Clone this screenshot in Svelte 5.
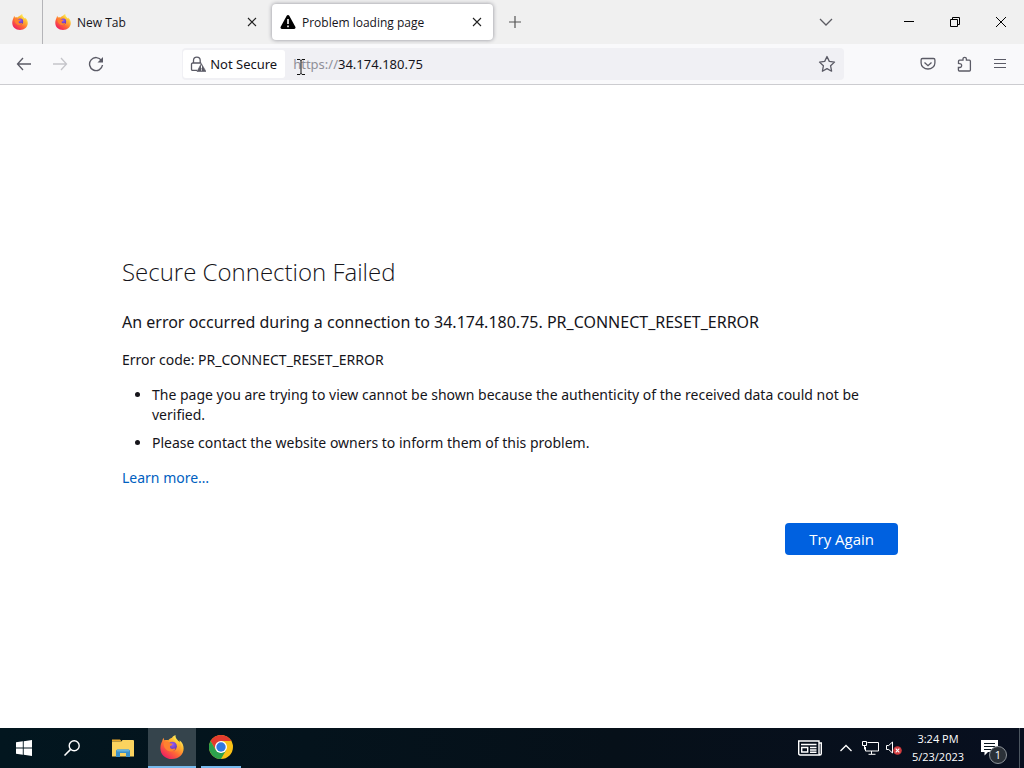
<script>
  let address = $state('34.174.180.75');

  const tips = [
    'The page you are trying to view cannot be shown because the authenticity of the received data could not be verified.',
    'Please contact the website owners to inform them of this problem.'
  ];
</script>

<svelte:head>
  <title>Problem loading page</title>
</svelte:head>

{#snippet firefox(size, id)}
  <svg width={size} height={size} viewBox="0 0 32 32" aria-hidden="true">
    <defs>
      <linearGradient id="{id}-flame" x1="0.85" y1="0.1" x2="0.2" y2="0.95">
        <stop offset="0" stop-color="#fff36a" />
        <stop offset="0.3" stop-color="#ffb52e" />
        <stop offset="0.6" stop-color="#ff6a35" />
        <stop offset="1" stop-color="#ee1d62" />
      </linearGradient>
      <linearGradient id="{id}-edge" x1="0.5" y1="0" x2="0.5" y2="1">
        <stop offset="0" stop-color="#fff04f" />
        <stop offset="0.5" stop-color="#ffc233" />
        <stop offset="1" stop-color="#ff8a35" />
      </linearGradient>
      <radialGradient id="{id}-globe" cx="0.5" cy="0.3" r="0.7">
        <stop offset="0" stop-color="#9a5cf5" />
        <stop offset="1" stop-color="#5934b0" />
      </radialGradient>
    </defs>
    <path
      fill="url(#{id}-flame)"
      d="M21 0c-2 3-1 6 2 8l3 3c.5-2 0-4 0-4 4 3 5.500 7 5.500 11C31.500 26 25 32 16 32S.500 26 .500 17.500C.500 13 2 10 3 8c.2-1.500 1-3.500 2-4.500C5 5 5.500 6.500 6 7c2-.5 4-.4 5 0 1-1.700 3-3 5-3.500 1-1.500 3-3 5-3.500z" />
    <circle cx="16.500" cy="15" r="6" fill="url(#{id}-globe)" />
    <path
      fill="#ff8130"
      d="M5 10c3-2 6-1.500 8 1l3.500.8c.5 1.500-1.500 2.500-3 3-.5 1.500 0 3 1.500 3.600 2 .7 3.500-1 5.500 0-1.500 3.500-6 4.500-10 2.500S4 14 5 10z" />
    <path
      fill="url(#{id}-edge)"
      d="M20.500 1c-2 3-2 5 0 7.500 2 2.500 3 5 2.500 8-.4 2.500-2 4.500-3.500 5.500 6 0 9-5 8-10C27 8 21 7 20.500 1z" />
  </svg>
{/snippet}

{#snippet cross()}
  <svg width="10" height="10" viewBox="0 0 10 10" aria-hidden="true">
    <path d="M1 1l8 8M9 1L1 9" fill="none" stroke="#222" stroke-width="1.100" />
  </svg>
{/snippet}

<div class="screen">
  <header>
    <div class="tabs">
      <button class="view" aria-label="Firefox View">{@render firefox(16, 'view')}</button>
      <div class="tab">
        {@render firefox(16, 'tab')}
        <button class="name">New Tab</button>
        <button class="close" aria-label="Close New Tab">{@render cross()}</button>
      </div>
      <div class="tab active">
        <svg width="16" height="16" viewBox="0 0 16 16" aria-hidden="true">
          <path d="M6.700 1.700a1.500 1.500 0 0 1 2.600 0l6 11A1.500 1.500 0 0 1 14 15H2a1.500 1.500 0 0 1-1.300-2.300z" fill="#000" />
          <path d="M8 5v5M8 11.500v1.700" stroke="#fff" stroke-width="1.600" />
        </svg>
        <button class="name">Problem loading page</button>
        <button class="close" aria-label="Close Problem loading page">{@render cross()}</button>
      </div>
      <button class="new" aria-label="Open a new tab">
        <svg width="12" height="12" viewBox="0 0 12 12"><path d="M6 0v12M0 6h12" stroke="#555" stroke-width="1.200" /></svg>
      </button>
      <button class="list" aria-label="List all tabs">
        <svg width="14" height="8" viewBox="0 0 14 8"><path d="M1 1l6 6 6-6" fill="none" stroke="#5b5b62" stroke-width="1.300" /></svg>
      </button>
      <div class="window">
        <button aria-label="Minimize">
          <svg width="10" height="10" viewBox="0 0 10 10"><path d="M0 4.500h10" stroke="#000" /></svg>
        </button>
        <button aria-label="Restore">
          <svg width="10" height="10" viewBox="0 0 10 10"><path d="M.5 2.500h7v7h-7zM2.500 2.500v-2h7v7h-2" fill="none" stroke="#000" /></svg>
        </button>
        <button aria-label="Close">
          <svg width="10" height="10" viewBox="0 0 10 10"><path d="M0 0l10 10M10 0L0 10" stroke="#000" /></svg>
        </button>
      </div>
    </div>

    <div class="nav">
      <button aria-label="Back">
        <svg width="16" height="16" viewBox="0 0 16 16"><path d="M7 2L1.500 8 7 14M1.500 8H15" fill="none" stroke="#5b5b66" stroke-width="1.300" /></svg>
      </button>
      <button aria-label="Forward" disabled>
        <svg width="16" height="16" viewBox="0 0 16 16"><path d="M9 2l5.500 6L9 14M14.500 8H1" fill="none" stroke="#c5c5ca" stroke-width="1.300" /></svg>
      </button>
      <button aria-label="Reload">
        <svg width="16" height="16" viewBox="0 0 16 16">
          <path d="M13.500 4.500A6.500 6.500 0 1 0 14.500 9" fill="none" stroke="#5b5b66" stroke-width="1.400" />
          <path d="M15 1v5.500H9.500z" fill="#5b5b66" />
        </svg>
      </button>
      <div class="spring"></div>
      <div class="urlbar">
        <button class="identity">
          <svg width="16" height="16" viewBox="0 0 16 16" aria-hidden="true">
            <path d="M7 14.400H2.700A1.200 1.200 0 0 1 1.500 13V8.200A1.200 1.200 0 0 1 2.700 7h8.500M3.500 7V4.500a3.300 3.300 0 0 1 6.700 0V7" fill="none" stroke="#5b5b66" stroke-width="1.300" />
            <path d="M11.300 7.500L16 15.500H7z" fill="#5b5b66" stroke="#5b5b66" stroke-linejoin="round" stroke-width=".6" />
            <path d="M11.500 9.500v3M11.500 13.300v1.200" stroke="#fff" />
          </svg>
          Not Secure
        </button>
        <label for="address">https://</label>
        <input id="address" type="text" bind:value={address} spellcheck="false" />
        <button class="star" aria-label="Bookmark this page">
          <svg width="18" height="18" viewBox="0 0 18 18">
            <path d="M9 1.500l2.300 4.900 5.200.7-3.900 3.700 1 5.400L9 13.600l-4.600 2.600 1-5.400L1.500 7.100l5.200-.7z" fill="none" stroke="#5b5b66" stroke-width="1.300" stroke-linejoin="round" />
          </svg>
        </button>
        <svg class="pointer" width="8" height="16" viewBox="0 0 8 16" aria-hidden="true">
          <path d="M0 .5h3l1 1 1-1h3M4 1v14M0 15.500h3l1-1 1 1h3" fill="none" stroke="#111" />
        </svg>
      </div>
      <div class="spring"></div>
      <button aria-label="Save to Pocket">
        <svg width="16" height="16" viewBox="0 0 16 16"><path d="M2.500 2.500h11c.8 0 1.400.6 1.400 1.400V7a6.900 6 0 0 1-13.800 0V3.900c0-.8.6-1.400 1.400-1.400zM4.500 6.500L8 9.700l3.500-3.200" fill="none" stroke="#5b5b66" stroke-width="1.300" /></svg>
      </button>
      <button aria-label="Extensions">
        <svg width="16" height="16" viewBox="0 0 16 16"><path d="M2.500 7.500V5.200c0-.6.4-1 1-1H7V3a1.700 1.700 0 0 1 3.400 0v1.200h3c.6 0 1 .4 1 1V14c0 .6-.4 1-1 1h-10c-.6 0-1-.4-1-1v-2.500h1.300a1.900 1.900 0 0 0 0-3.900z" fill="none" stroke="#5b5b66" stroke-width="1.300" /></svg>
      </button>
      <button aria-label="Open application menu">
        <svg width="14" height="12" viewBox="0 0 14 12"><path d="M1 1.500h12M1 5.500h12M1 9.500h12" stroke="#5b5b66" stroke-width="1.200" /></svg>
      </button>
    </div>
  </header>

  <main>
    <div class="error">
      <h1>Secure Connection Failed</h1>
      <p class="short">An error occurred during a connection to 34.174.180.75. PR_CONNECT_RESET_ERROR</p>
      <p>Error code: PR_CONNECT_RESET_ERROR</p>
      <ul>
        {#each tips as tip}
          <li>{tip}</li>
        {/each}
      </ul>
      <a href="#learn">Learn more…</a>
      <button class="retry">Try Again</button>
    </div>
  </main>

  <footer>
    <button aria-label="Start">
      <svg width="16" height="16" viewBox="0 0 16 16"><path d="M0 2.300L6.800 1.300v6.200H0zM7.700 1.200L16 0v7.500H7.700zM0 8.400h6.800v6.300L0 13.700zM7.700 8.400H16V16l-8.300-1.200z" fill="#fff" /></svg>
    </button>
    <button aria-label="Search">
      <svg width="16" height="16" viewBox="0 0 16 16"><circle cx="10.200" cy="5.800" r="5" fill="none" stroke="#fff" stroke-width="1.400" /><path d="M6.600 9.400L.5 15.500" stroke="#fff" stroke-width="1.500" /></svg>
    </button>
    <div class="apps">
      <button aria-label="File Explorer">
        <svg width="22" height="18" viewBox="0 0 22 18">
          <path d="M0 .5h8l2 2H0z" fill="#e9a82c" />
          <path d="M0 2.500h9.500l1-1.500H21q1 0 1 1v15.500H0z" fill="#fbd35f" />
          <path d="M4 18v-6q0-1.500 1.500-1.500h11q1.500 0 1.500 1.500v6h-4v-4H8v4z" fill="#3c91c9" />
          <path d="M5 10.500h12v2H5z" fill="#63b2de" />
        </svg>
      </button>
      <button class="open current" aria-label="Firefox">{@render firefox(24, 'task')}</button>
      <button class="open behind" aria-label="Google Chrome">
        <svg width="24" height="24" viewBox="0 0 24 24">
          <circle cx="12" cy="12" r="12" fill="#fbc116" />
          <path d="M12 0A12 12 0 0 1 22.400 6H12L6.800 15 1.600 6A12 12 0 0 1 12 0z" fill="#e33b2e" />
          <path d="M1.600 6A12 12 0 0 0 12 24l5.200-9-5.200 3-5.200-3z" fill="#2da14c" />
          <circle cx="12" cy="12" r="6" fill="#fff" />
          <circle cx="12" cy="12" r="4.700" fill="#3178e0" />
        </svg>
      </button>
    </div>

    <div class="tray">
      <button class="news" aria-label="News and interests">
        <svg width="24" height="16" viewBox="0 0 24 16">
          <path d="M21 3h2.300v10.500q0 1.500-1.500 1.500H2.200Q.7 15 .7 13.500V1H21v12.500q0 1 1 1" fill="none" stroke="#fff" stroke-width="1.400" />
          <path d="M3.700 7.500h6v4.500h-6zM3 4.500h15.500M12 7.500h6.500M12 10h6.500M12 12.300h6.500" fill="none" stroke="#fff" stroke-width="1.400" />
        </svg>
      </button>
      <button aria-label="Show hidden icons">
        <svg width="12" height="8" viewBox="0 0 12 8"><path d="M.5 7L6 1.500 11.500 7" fill="none" stroke="#fff" stroke-width="1.300" /></svg>
      </button>
      <button aria-label="Network">
        <svg width="17" height="14" viewBox="0 0 17 14">
          <path d="M5.500 1.500h11v8.500h-13V6M9.500 10v3M6.500 13.300h7M.5.500h4v4h-4zM2.500 4.500v4" fill="none" stroke="#fff" />
        </svg>
      </button>
      <button aria-label="Volume muted">
        <svg width="16" height="14" viewBox="0 0 16 14">
          <path d="M.5 4.500h2.200L6.500 1v11L2.700 8.500H.5z" fill="none" stroke="#fff" />
          <circle cx="11.500" cy="9.500" r="4.300" fill="#d13b3e" />
          <path d="M9.700 7.700l3.600 3.600M13.300 7.700l-3.600 3.600" stroke="#fff" stroke-width="1.100" />
        </svg>
      </button>
      <button class="clock"><time>3:24 PM</time><time>5/23/2023</time></button>
      <button class="notes" aria-label="1 new notification">
        <svg width="17" height="16" viewBox="0 0 17 16">
          <path d="M0 0h17v12H7l-3.500 3.500V12H0z" fill="#fff" />
          <path d="M3 3.500h11M3 6.500h11M3 9.500h8" stroke="#06131d" />
        </svg>
        <span>1</span>
      </button>
    </div>
  </footer>
</div>

<style>
  :global(body) {
    margin: 0;
  }

  .screen {
    display: flex;
    flex-direction: column;
    min-height: 100vh;
    background: #fff;
    color: #15141a;
    font-family: 'Segoe UI', 'Noto Sans', 'Open Sans', sans-serif;
    font-size: 14px;
    line-height: 20px;
  }

  button {
    display: flex;
    align-items: center;
    justify-content: center;
    flex-shrink: 0;
    padding: 0;
    border: 0;
    background: none;
    color: inherit;
    font: inherit;
  }

  svg {
    display: block;
    flex-shrink: 0;
  }

  .tabs,
  footer {
    font-family: 'Segoe UI', 'Open Sans', sans-serif;
  }

  .tabs {
    display: flex;
    align-items: center;
    height: 44px;
    background: #f0f0f0;
    font-size: 12px;
  }

  .view {
    width: 43px;
    height: 44px;
    padding-right: 2px;
    border-right: 1px solid #b4b4b8;
    box-sizing: border-box;
    margin-right: 4px;
  }

  .tab {
    display: flex;
    align-items: center;
    flex: 0 1 221px;
    gap: 6px;
    height: 36px;
    margin-right: 4px;
    padding: 0 7px 0 8px;
    box-sizing: border-box;
    border-radius: 4px;
  }

  .active {
    background: #fff;
    box-shadow: 0 0 4px #8e8e96;
  }

  .name {
    flex: 1;
    justify-content: start;
    padding-top: 2px;
    white-space: nowrap;
  }

  .close {
    width: 18px;
    height: 24px;
  }

  .new {
    width: 36px;
    height: 36px;
  }

  .list {
    width: 36px;
    height: 36px;
    margin-left: auto;
  }

  .window {
    display: flex;
    margin-left: 42px;
  }

  .window button {
    width: 46px;
    height: 44px;
  }

  .nav {
    display: flex;
    align-items: center;
    height: 40px;
    padding: 0 6px;
    border-bottom: 1px solid #ccccd0;
    background: #f9f9fb;
    font-size: 13px;
  }

  .nav > button {
    width: 36px;
    height: 32px;
  }

  .spring {
    flex: 1;
  }

  .urlbar {
    position: relative;
    display: flex;
    align-items: center;
    flex: 10;
    height: 32px;
    margin-left: 2px;
    border-radius: 4px;
    background: #f0f0f4;
  }

  .identity {
    gap: 4px;
    height: 28px;
    margin: 0 8px 0 1px;
    padding: 0 8px 0 7px;
    border-radius: 3px;
    background: #fff;
  }

  label {
    color: #8f8f98;
  }

  input {
    flex: 1;
    min-width: 0;
    padding: 0;
    border: 0;
    outline: 0;
    background: none;
    color: inherit;
    font: inherit;
    line-height: 20px;
  }

  .star {
    width: 34px;
    height: 32px;
  }

  .pointer {
    position: absolute;
    left: 115px;
    top: 11px;
  }

  main {
    display: flex;
    align-items: center;
    justify-content: center;
    flex: 1;
    padding: 0 48px;
  }

  .error {
    display: flex;
    flex-direction: column;
    align-items: start;
    width: 100%;
    max-width: 780px;
  }

  h1 {
    margin: 0 0 21px;
    font-family: 'Segoe UI', 'Open Sans', sans-serif;
    font-size: 24px;
    font-weight: 300;
    line-height: 34px;
  }

  p {
    margin: 0 0 15px;
  }

  .short {
    margin-bottom: 16px;
    font-size: 16px;
    line-height: 24px;
  }

  ul {
    margin: 0 0 15px;
    padding: 0 30px;
  }

  li + li {
    margin-top: 8px;
  }

  a {
    color: #0060bf;
    text-decoration: none;
  }

  .retry {
    align-self: end;
    height: 32px;
    margin: 35px 4px 4px;
    padding: 0 24px;
    border-radius: 4px;
    background: #0061e0;
    color: #fff;
    font-family: 'Segoe UI', 'Open Sans', sans-serif;
    font-size: 15px;
  }

  footer {
    display: flex;
    height: 40px;
    background: linear-gradient(90deg, #02161f, #061019 60%, #080f1f);
    color: #fff;
  }

  footer button {
    width: 48px;
    height: 40px;
  }

  .apps {
    display: flex;
    gap: 1px;
    margin-left: 3px;
  }

  .open {
    box-sizing: border-box;
    border-bottom: 2px solid #76b9ed;
  }

  .current {
    background: #35444c;
  }

  .behind {
    width: 40px;
    margin: 0 4px;
  }

  .tray {
    display: flex;
    margin-left: auto;
    padding-right: 4px;
  }

  .tray button {
    width: 24px;
  }

  .tray .news {
    width: 48px;
  }

  .tray .clock {
    flex-direction: column;
    width: 64px;
    font-size: 11px;
    line-height: 18px;
  }

  .tray .notes {
    position: relative;
    width: 49px;
    padding-right: 10px;
    border-right: 1px solid #4c5660;
    box-sizing: content-box;
    width: 39px;
  }

  .notes span {
    position: absolute;
    right: 12px;
    bottom: 4px;
    width: 16px;
    border: 1px solid #8d9399;
    border-radius: 50%;
    background: #2b3138;
    font-size: 11px;
    line-height: 16px;
  }
</style>
